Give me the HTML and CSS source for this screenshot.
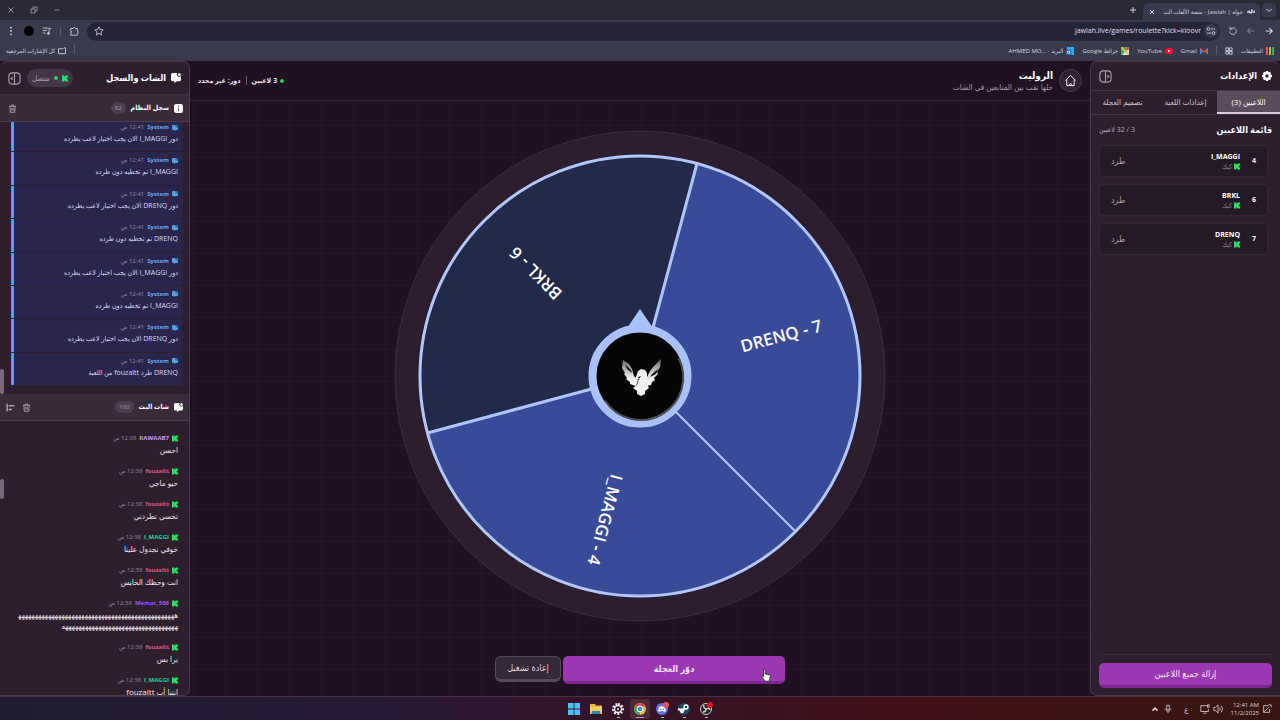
FILE: index.html
```html
<!DOCTYPE html>
<html lang="ar" dir="rtl">
<head>
    <meta charset="UTF-8">
    <meta name="viewport" content="width=device-width, initial-scale=1.0">
    <title>جولة | Jawlah - منصة الألعاب</title>
    <link rel="stylesheet" href="styles.css">
</head>
<body>
    <!-- Icons -->
    <svg class="sprite" aria-hidden="true">
        <symbol id="kick" viewBox="0 0 10 10"><path d="M0 0h4v2h1V1h1V0h4v3H9v1H8v2h1v1h1v3H6V9H5V8H4v2H0z"/></symbol>
        <symbol id="chat" viewBox="0 0 12 12"><path d="M2 0h5.500a2.500 2.500 0 0 0 4.500 3.500V8a2 2 0 0 1-2 2H7l-3 2v-2H2a2 2 0 0 1-2-2V2a2 2 0 0 1 2-2z"/><circle cx="10" cy="2" r="1.700"/></symbol>
        <symbol id="trash" viewBox="0 0 12 12"><path d="M1.500 3h9M4.500 3V1.500h3V3M2.500 3l.5 8h6l.5-8M5 5.200v3.600M7 5.200v3.600" fill="none" stroke="currentColor" stroke-width="1.300"/></symbol>
        <symbol id="panel" viewBox="0 0 14 14"><rect x="1" y="1" width="12" height="12" rx="3.500" fill="none" stroke="currentColor" stroke-width="1.200"/><path d="M7 1v12M9 5.500 10.500 7 9 8.500" fill="none" stroke="currentColor" stroke-width="1.200"/></symbol>
        <symbol id="arrow" viewBox="0 0 12 12"><path d="M2 6h8M6.500 2.500 10 6 6.500 9.500" fill="none" stroke="currentColor" stroke-width="1.300"/></symbol>
    </svg>

    <div class="browser">
        <div class="tab-strip">
            <button class="tab-menu" aria-label="بحث في علامات التبويب"><svg viewBox="0 0 8 8"><path d="M1.500 3 4 5.500 6.500 3" class="line"/></svg></button>
            <div class="browser-tab">
                <svg class="favicon" viewBox="0 0 10 6"><path d="M0 2h2V1h2v2h1V0h2v3h1V1h2v3H6v1H3V4H0z"/></svg>
                <span class="tab-title">جولة | Jawlah - منصة الألعاب الت</span>
                <button aria-label="إغلاق"><svg viewBox="0 0 8 8"><path d="m2 2 4 4M6 2 2 6" class="line"/></svg></button>
            </div>
            <button class="new-tab" aria-label="علامة تبويب جديدة"><svg viewBox="0 0 8 8"><path d="M4 1v6M1 4h6" class="line"/></svg></button>
            <div class="window-buttons">
                <button aria-label="تصغير"><svg viewBox="0 0 8 8"><path d="M1.500 4h5" class="line"/></svg></button>
                <button aria-label="استعادة"><svg viewBox="0 0 8 8"><path d="M1 3h4v4H1zM3 3V1h4v4H5" class="line"/></svg></button>
                <button aria-label="إغلاق النافذة"><svg viewBox="0 0 8 8"><path d="m1.500 1.500 5 5M6.500 1.500l-5 5" class="line"/></svg></button>
            </div>
        </div>
        <div class="toolbar">
            <button aria-label="التالي"><svg viewBox="0 0 12 12"><use href="#arrow"/></svg></button>
            <button class="dim" aria-label="السابق"><svg class="flip" viewBox="0 0 12 12"><use href="#arrow"/></svg></button>
            <button aria-label="تحديث"><svg viewBox="0 0 12 12"><path d="M3 3.500A4 4 0 1 1 2 6.500M2.500 1v3h3" class="line"/></svg></button>
            <div class="address">
                <span class="site-info"><svg viewBox="0 0 12 12"><path d="M6 3.500h5M1 8.500h5" class="line"/><circle cx="3" cy="3.500" r="1.700" class="line"/><circle cx="9" cy="8.500" r="1.700" class="line"/></svg></span>
                <input type="text" dir="ltr" aria-label="العنوان" value="jawlah.live/games/roulette?kick=kloovr">
                <button aria-label="إشارة مرجعية"><svg viewBox="0 0 12 12"><path d="m6 1 1.500 3.300 3.500.4-2.600 2.400.7 3.600L6 8.900l-3.100 1.800.7-3.600L1 4.700l3.500-.4z" class="line"/></svg></button>
            </div>
            <button class="extensions" aria-label="الإضافات"><svg viewBox="0 0 12 12"><path d="M2 3h3a1.300 1.300 0 0 1 2.600 0H10v3a1.300 1.300 0 0 1 0 2.600V11H2V8.600a1.300 1.300 0 0 0 0-2.600z" class="line"/></svg></button>
            <span class="divider"></span>
            <button aria-label="الوسائط"><svg viewBox="0 0 12 12"><path d="M1 2.500h7M1 5.500h5M1 8.500h3M8.500 9V3H11" class="line"/><circle cx="7.500" cy="9" r="1.500"/></svg></button>
            <button class="profile" aria-label="الملف الشخصي"></button>
            <button aria-label="القائمة"><svg viewBox="0 0 12 12"><circle cx="6" cy="2" r="1.100"/><circle cx="6" cy="6" r="1.100"/><circle cx="6" cy="10" r="1.100"/></svg></button>
        </div>
        <nav class="bookmarks">
            <a href="#"><svg viewBox="0 0 9 9"><path fill="#ef5b52" d="M0 0h2v9H0z"/><path fill="#e5c044" d="M3.500 0h2v9h-2z"/><path fill="#43b670" d="M7 0h2v9H7z"/></svg>التطبيقات</a>
            <a href="#" aria-label="مجموعات"><svg viewBox="0 0 9 9"><path d="M1 1h3v3H1zM5 1h3v3H5zM1 5h3v3H1zM5 5h3v3H5z" class="line"/></svg></a>
            <span class="divider"></span>
            <a href="#"><svg viewBox="0 0 9 9"><path fill="#4789ed" d="M0 2h2v6H0z"/><path fill="#39a957" d="M7 2h2v6H7z"/><path fill="#e54d42" d="m0 1 4.500 3.500L9 1v2L4.500 6.500 0 3z"/></svg>Gmail</a>
            <a href="#"><svg viewBox="0 0 9 9"><rect y="1" width="9" height="7" rx="2" fill="#ff0035"/><path fill="#fff" d="m3.500 3 2.500 1.500L3.500 6z"/></svg>YouTube</a>
            <a href="#"><svg viewBox="0 0 9 9"><path fill="#40af61" d="M0 0h9v9H0z"/><path fill="#e4e9ec" d="m1 9 8-8v8z"/><path stroke="#e8bd42" stroke-width="2" d="m0 0 9 9"/><circle cx="7" cy="2" r="2" fill="#e44e45"/></svg><span>خرائط Google</span></a>
            <a href="#"><svg viewBox="0 0 9 9"><path fill="#36a9ec" d="M1 0h8v9H1z"/><path fill="#1269bd" d="M0 3h6v6H0z"/><circle cx="3" cy="6" r="1.400" fill="none" stroke="#fff"/></svg><span>البريد - <bdi>AHMED MO...</bdi></span></a>
            <div class="all-bookmarks">
                <span class="divider"></span>
                <a href="#"><svg viewBox="0 0 9 9"><path d="M.5 2h5l1-1h2v6.500h-8z" class="line"/></svg>كل الإشارات المرجعية</a>
            </div>
        </nav>
    </div>

    <div class="app">
        <aside class="panel settings">
            <header class="panel-head">
                <svg class="head-icon" viewBox="0 0 12 12"><path fill-rule="evenodd" d="M4.800 0h2.400l.4 1.600 1.500-.6 1.800 1.800-.8 1.500 1.900.5v2.400l-1.900.5.8 1.500-1.800 1.800-1.500-.8-.4 1.800H4.800l-.4-1.800-1.500.8-1.800-1.800.8-1.500L0 7.200V4.800l1.900-.5-.8-1.500L2.900 1l1.500.6zM6 4a2 2 0 1 0 0 4 2 2 0 0 0 0-4z"/></svg>
                <h2>الإعدادات</h2>
                <button class="collapse" aria-label="طي اللوحة"><svg viewBox="0 0 14 14"><use href="#panel"/></svg></button>
            </header>
            <div class="tabs">
                <button class="tab active">اللاعبين (3)</button>
                <button class="tab">إعدادات اللعبة</button>
                <button class="tab">تصميم العجلة</button>
            </div>
            <div class="players-head">
                <h3>قائمة اللاعبين</h3>
                <span>3 / 32 لاعبين</span>
            </div>
            <ul class="players">
                <li class="player">
                    <span class="number">4</span>
                    <div class="who"><strong>I_MAGGI</strong><small><svg class="kick"><use href="#kick"/></svg>كيك</small></div>
                    <button class="kick-out">طرد</button>
                </li>
                <li class="player">
                    <span class="number">6</span>
                    <div class="who"><strong>BRKL</strong><small><svg class="kick"><use href="#kick"/></svg>كيك</small></div>
                    <button class="kick-out">طرد</button>
                </li>
                <li class="player">
                    <span class="number">7</span>
                    <div class="who"><strong>DRENQ</strong><small><svg class="kick"><use href="#kick"/></svg>كيك</small></div>
                    <button class="kick-out">طرد</button>
                </li>
            </ul>
            <footer class="settings-foot">
                <button class="primary">إزالة جميع اللاعبين</button>
            </footer>
        </aside>

        <main class="game">
            <header class="game-head">
                <a class="home" href="#" aria-label="الرئيسية"><svg viewBox="0 0 14 14"><path d="M1.500 7 7 1.500 12.500 7M3 6v6.500h8V6M5.500 12a1.500 1.500 0 0 1 3 0" class="line"/></svg></a>
                <div class="game-title">
                    <h1>الروليت</h1>
                    <p>خلها تقب بين المتابعين في الشات</p>
                </div>
                <div class="status">
                    <span class="dot"></span>
                    <span>3 لاعبين</span>
                    <span class="divider"></span>
                    <span>دور: غير محدد</span>
                </div>
            </header>
            <div class="stage">
                <svg class="wheel" viewBox="0 0 492 492">
                    <defs>
                        <linearGradient id="wing" x1="0" y1="0" x2="0" y2="1"><stop offset="0" stop-color="#666"/><stop offset=".6" stop-color="#ddd"/><stop offset="1" stop-color="#fff"/></linearGradient>
                    </defs>
                    <circle cx="246" cy="246" r="245" fill="#2d1e2f" stroke="#3a2b3d"/>
                    <circle cx="246" cy="246" r="220" fill="#394b98"/>
                    <path d="M246 246 33.500 303A220 220 0 0 1 303 33.500z" fill="#232948"/>
                    <path d="M303 33.500 246 246 33.500 303" fill="none" stroke="#aec4fb" stroke-width="3"/>
                    <path d="m246 246 155.500 155.500" stroke="#aec4fb" stroke-width="2"/>
                    <circle cx="246" cy="246" r="220" fill="none" stroke="#b2c7fd" stroke-width="3"/>
                    <g class="slice-label">
                        <text transform="translate(387 205) rotate(-15)" dy="7">DRENQ - 7</text>
                        <text transform="translate(141 144) rotate(225)" dy="7">BRKL - 6</text>
                        <text transform="translate(212 390) rotate(105)" dy="7">I_MAGGI - 4</text>
                    </g>
                    <path d="m246 179 15 22h-30z" fill="#a9c1f8"/>
                    <circle cx="246" cy="246" r="47.500" fill="#050505" stroke="#a9c1f8" stroke-width="8"/>
                    <path d="M284.500 228A42.500 42.500 0 0 1 211 270.500" fill="none" stroke="#4c4c4c" stroke-width="2"/>
                    <!-- eagle -->
                    <path d="M229 230 228 238l3 5-1 1 3 4-1 1 4 3 0 2 6 2 2-6-4-4-2-7-3-5zM267 229l-7 7-4 5-3 6-1 9 5-1 1-3 3-2-1-2 4-4-1-2 3-5z" fill="url(#wing)"/>
                    <path d="m244 241 3-2 4 1 2 3 0 11 2 4-4 3 0 3-4 2-4-2 0-3-4-3 4-3 2-6-4 1z" fill="#f2f2f2"/>
                    <path d="m231 234 6 6 1 3-5-4zM264 239l-6 5-2 3 6-3zM244 247l3-1-2 3z" fill="#111"/>
                </svg>
            </div>
            <div class="actions">
                <button class="primary spin">دوّر العجلة</button>
                <button class="restart">إعادة تشغيل</button>
                <svg class="pointer" viewBox="0 0 12 16"><path d="M3 1.500c1-1 2 0 2 1V6l5 1c1 .3 1.500 1 1.300 2l-.8 4-1 2H5L1 10c-.5-1 .5-1.700 1.300-1.200L3 9.500z" fill="#fff" stroke="#222"/></svg>
            </div>
        </main>

        <aside class="panel feed">
            <header class="panel-head">
                <svg class="head-icon" viewBox="0 0 12 12"><use href="#chat"/></svg>
                <h2>الشات والسجل</h2>
                <span class="connected"><svg class="kick"><use href="#kick"/></svg><i class="dot"></i>متصل</span>
                <button class="collapse" aria-label="طي اللوحة"><svg class="flip" viewBox="0 0 14 14"><use href="#panel"/></svg></button>
            </header>
            <section class="log">
                <header class="section-head">
                    <svg class="section-icon" viewBox="0 0 12 12"><path fill-rule="evenodd" d="M3 0h6a3 3 0 0 1 3 3v6a3 3 0 0 1-3 3H3a3 3 0 0 1-3-3V3a3 3 0 0 1 3-3zm2.500 2.500V4h1V2.500zm0 2.500v4.500h1V5z"/></svg>
                    <h3>سجل النظام</h3>
                    <span class="count">82</span>
                    <button aria-label="مسح"><svg viewBox="0 0 12 12"><use href="#trash"/></svg></button>
                </header>
                <div class="log-view">
                    <div class="log-list">
                        <article class="event"><p class="meta"><svg class="sys"><use href="#chat"/></svg><b>System</b><time>12:41 ص</time></p><p>دور I_MAGGI الان يجب اختيار لاعب يطرده</p></article>
                        <article class="event"><p class="meta"><svg class="sys"><use href="#chat"/></svg><b>System</b><time>12:41 ص</time></p><p>I_MAGGI تم تخطيه دون طرده</p></article>
                        <article class="event"><p class="meta"><svg class="sys"><use href="#chat"/></svg><b>System</b><time>12:41 ص</time></p><p>دور DRENQ الان يجب اختيار لاعب يطرده</p></article>
                        <article class="event"><p class="meta"><svg class="sys"><use href="#chat"/></svg><b>System</b><time>12:41 ص</time></p><p>DRENQ تم تخطيه دون طرده</p></article>
                        <article class="event"><p class="meta"><svg class="sys"><use href="#chat"/></svg><b>System</b><time>12:41 ص</time></p><p>دور I_MAGGI الان يجب اختيار لاعب يطرده</p></article>
                        <article class="event"><p class="meta"><svg class="sys"><use href="#chat"/></svg><b>System</b><time>12:41 ص</time></p><p>I_MAGGI تم تخطيه دون طرده</p></article>
                        <article class="event"><p class="meta"><svg class="sys"><use href="#chat"/></svg><b>System</b><time>12:41 ص</time></p><p>دور DRENQ الان يجب اختيار لاعب يطرده</p></article>
                        <article class="event"><p class="meta"><svg class="sys"><use href="#chat"/></svg><b>System</b><time>12:41 ص</time></p><p>DRENQ طرد fouzaltt من اللعبة</p></article>
                    </div>
                    <span class="thumb"></span>
                </div>
            </section>
            <section class="chat">
                <header class="section-head">
                    <svg class="section-icon" viewBox="0 0 12 12"><use href="#chat"/></svg>
                    <h3>شات البث</h3>
                    <span class="count">100</span>
                    <button aria-label="مسح"><svg viewBox="0 0 12 12"><use href="#trash"/></svg></button>
                    <button aria-label="محاذاة"><svg viewBox="0 0 12 12"><path d="M1.500 1v10M3.500 3.500H11M3.500 8.500H8" class="line bold"/></svg></button>
                </header>
                <div class="chat-view">
                    <article class="message"><p class="meta"><svg class="kick"><use href="#kick"/></svg><b class="lilac">RAWAAB7</b><time>12:38 ص</time></p><p>احسن</p></article>
                    <article class="message"><p class="meta"><svg class="kick"><use href="#kick"/></svg><b class="pink">fouzaltt</b><time>12:38 ص</time></p><p>حيو ماجي</p></article>
                    <article class="message"><p class="meta"><svg class="kick"><use href="#kick"/></svg><b class="pink">fouzaltt</b><time>12:38 ص</time></p><p>تخسي تطردني</p></article>
                    <article class="message"><p class="meta"><svg class="kick"><use href="#kick"/></svg><b class="teal">I_MAGGI</b><time>12:38 ص</time></p><p>خوفي تجدول علينا</p></article>
                    <article class="message"><p class="meta"><svg class="kick"><use href="#kick"/></svg><b class="pink">fouzaltt</b><time>12:38 ص</time></p><p>انت وحظك الخايس</p></article>
                    <article class="message"><p class="meta"><svg class="kick"><use href="#kick"/></svg><b class="violet">Memat_506</b><time>12:38 ص</time></p><p>ههههههههههههههههههههههههههههههههههههههههههههههههههههههههههههههههههههههههههههههههههه</p></article>
                    <article class="message"><p class="meta"><svg class="kick"><use href="#kick"/></svg><b class="pink">fouzaltt</b><time>12:38 ص</time></p><p>برا بس</p></article>
                    <article class="message"><p class="meta"><svg class="kick"><use href="#kick"/></svg><b class="teal">I_MAGGI</b><time>12:38 ص</time></p><p>انتبا أب fouzaltt</p></article>
                    <span class="thumb"></span>
                </div>
            </section>
        </aside>
    </div>

    <footer class="taskbar">
        <div class="tray">
            <svg viewBox="0 0 12 12"><path d="M8 2H2v8h7V6M2 10l6-6M8 1h3v3" class="line"/></svg>
            <time dir="ltr">12:41 AM<br>11/2/2025</time>
            <svg viewBox="0 0 12 12"><path d="M1 4h2l3-3v10L3 8H1zM8 4q1.500 2 0 4M10 2q3 4 0 8" class="line"/></svg>
            <svg viewBox="0 0 12 12"><path d="M8 2H1v7h9V6M4 11h4M9 1h2v3H9z" class="line"/></svg>
            <span class="lang">ع</span>
            <svg viewBox="0 0 12 12"><path d="M4.500 1.500h3v5h-3zM2.500 5.500c0 4 7 4 7 0M6 8.500V11" class="line"/></svg>
            <svg viewBox="0 0 12 12"><path d="m3 8 3-3 3 3" class="line bold"/></svg>
        </div>
        <div class="dock" dir="ltr">
            <button aria-label="ابدأ"><svg viewBox="0 0 14 14"><path fill="#4cc2f4" d="M1 1h5.600v5.600H1zM7.400 1H13v5.600H7.400zM1 7.400h5.600V13H1zM7.400 7.400H13V13H7.400z"/></svg></button>
            <button aria-label="الملفات"><svg viewBox="0 0 14 14"><path fill="#e9b43a" d="M1 2h5l1 1.500h6V12H1z"/><path fill="#f7d35d" d="M1 5h12v5H1z"/><path fill="#2c83c4" d="M3 9h8v3H3z"/></svg></button>
            <button class="running" aria-label="الإعدادات"><svg viewBox="0 0 14 14"><path fill="none" stroke="#eee" stroke-width="2" stroke-dasharray="2 1.500" d="M7 2a5 5 0 1 1 0 10A5 5 0 1 1 7 2"/><circle cx="7" cy="7" r="3.500" fill="none" stroke="#eee" stroke-width="1.500"/><circle cx="7" cy="7" r="1" fill="#eee"/></svg></button>
            <button class="current" aria-label="Chrome"><svg viewBox="0 0 14 14"><circle cx="7" cy="7" r="6" fill="#e5bd38"/><path fill="#dc493e" d="M7 7 1.800 4A6 6 0 0 1 12.200 4z"/><path fill="#3ca45a" d="M7 7 1.800 4A6 6 0 0 0 7 13z"/><circle cx="7" cy="7" r="3" fill="#4b8cf1" stroke="#fff"/></svg></button>
            <button class="running" aria-label="Discord"><svg viewBox="0 0 14 14"><circle cx="7" cy="7" r="6" fill="#6270df"/><path fill="#fff" d="M4 5q3-1.500 6 0l1 4-2 1-.7-1H5.700L5 10 3 9z"/><circle cx="5.700" cy="7.200" r=".8" fill="#6270df"/><circle cx="8.300" cy="7.200" r=".8" fill="#6270df"/><circle cx="11" cy="3" r="3" fill="#e9525a"/></svg></button>
            <button class="running" aria-label="Steam"><svg viewBox="0 0 14 14"><circle cx="7" cy="7" r="6" fill="#1b4767"/><circle cx="9" cy="5" r="2" fill="none" stroke="#fff" stroke-width="1.300"/><path stroke="#fff" stroke-width="2" d="m1 7 5 2 2-3"/><circle cx="5" cy="9.500" r="1.800" fill="#fff"/></svg></button>
            <button class="running" aria-label="OBS"><svg viewBox="0 0 14 14"><circle cx="7" cy="7" r="5.500" fill="#222" stroke="#ccc"/><path d="M7 7q-3-1-2-4M7 7q3-2 4 1M7 7q0 3-3 3" fill="none" stroke="#ccc" stroke-width="1.500"/><circle cx="11" cy="3" r="3" fill="#e81020"/></svg></button>
        </div>
    </footer>
</body>
</html>
```
FILE: styles.css
```css
* {
    box-sizing: border-box;
}
body {
    margin: 0;
    height: 100vh;
    display: flex;
    flex-direction: column;
    overflow: hidden;
    background-color: #1f1022;
    color: #eee6ef;
    font-family: "Open Sans", "DejaVu Sans Condensed", "DejaVu Sans", sans-serif;
    font-size: 8px;
    line-height: 12px;
}
h1, h2, h3, p, ul {
    margin: 0;
    padding: 0;
}
button {
    border: none;
    padding: 0;
    background: none;
    color: inherit;
    font: inherit;
    cursor: pointer;
}
a {
    color: inherit;
    text-decoration: none;
}
svg {
    display: block;
    flex: none;
    fill: currentColor;
}
.sprite {
    position: absolute;
    width: 0;
    height: 0;
}
.line {
    fill: none;
    stroke: currentColor;
    stroke-width: 1;
}
.line.bold {
    stroke-width: 2;
}
.flip {
    transform: scaleX(-1);
}
.divider {
    width: 1px;
    height: 9px;
    background-color: #5b5a70;
}
.kick {
    width: 6px;
    height: 7px;
    color: #1ee660;
}
.dot {
    width: 4px;
    height: 4px;
    border-radius: 50%;
    background-color: #1fd65f;
}

/* Browser */
.browser {
    background-color: #393b4d;
    color: #d2d1dc;
    font-size: 7px;
}
.tab-strip {
    display: flex;
    align-items: center;
    height: 20px;
    padding: 0 4px;
    background-color: #292a36;
}
.tab-strip svg {
    width: 8px;
    height: 8px;
}
.tab-menu {
    padding: 3px;
    border-radius: 4px;
    background-color: #393b4d;
}
.browser-tab {
    display: flex;
    align-items: center;
    gap: 4px;
    width: 117px;
    height: 17px;
    margin: 3px 2px 0 0;
    padding: 0 5px;
    border-radius: 6px 6px 0 0;
    background-color: #393b4d;
}
.tab-strip .favicon {
    height: 6px;
}
.tab-title {
    flex: 1;
    font-size: 6px;
    white-space: nowrap;
}
.new-tab {
    margin-right: 6px;
}
.window-buttons {
    display: flex;
    gap: 15px;
    margin-right: auto;
    padding-left: 3px;
    color: #8c8b9a;
}
.toolbar {
    display: flex;
    align-items: center;
    gap: 8px;
    height: 22px;
    padding: 0 6px;
}
.toolbar svg {
    width: 10px;
    height: 10px;
}
.dim {
    color: #777789;
}
.address {
    display: flex;
    flex: 1;
    align-items: center;
    gap: 3px;
    height: 19px;
    padding: 0 2px 0 7px;
    border-radius: 10px;
    background-color: #262538;
}
.site-info {
    padding: 2px;
    border-radius: 50%;
    background-color: #393b4d;
}
.address input {
    flex: 1;
    min-width: 0;
    border: none;
    padding: 0;
    background: none;
    color: #e1dfeb;
    font: inherit;
    text-align: right;
}
.profile {
    width: 10px;
    height: 10px;
    border-radius: 50%;
    background-color: #000;
}
.bookmarks {
    display: flex;
    align-items: center;
    gap: 8px;
    height: 19px;
    padding: 0 6px 2px;
    font-size: 6px;
}
.bookmarks a {
    display: flex;
    align-items: center;
    gap: 3px;
}
.bookmarks svg {
    width: 8px;
    height: 8px;
}
.all-bookmarks {
    display: flex;
    gap: 8px;
    margin-right: auto;
}

/* Layout */
.app {
    display: flex;
    flex: 1;
    min-height: 0;
}
.panel {
    display: flex;
    flex: none;
    flex-direction: column;
    width: 190px;
    border: 1px solid #4a394c;
    background-color: #2e1f2f;
    overflow: hidden;
}
.settings {
    border-right: none;
    border-radius: 7px 7px 0 7px;
}
.feed {
    border-left: none;
    border-radius: 7px 7px 7px 0;
}
.panel-head {
    display: flex;
    align-items: center;
    flex: none;
    gap: 5px;
    padding: 0 8px;
    border-bottom: 1px solid #423244;
}
.panel-head h2 {
    color: #fff;
    font-size: 9px;
    font-weight: bold;
}
.head-icon {
    width: 10px;
    height: 10px;
    color: #fff;
}
.collapse {
    margin-right: auto;
    color: #aa9fac;
}
.collapse svg {
    width: 13px;
    height: 13px;
}

/* Settings panel */
.settings .panel-head {
    height: 29px;
}
.tabs {
    display: grid;
    grid-template-columns: repeat(3, 1fr);
    height: 24px;
    border-bottom: 1px solid #423244;
}
.tab {
    border-bottom: 2px solid transparent;
    color: #ccc1cd;
}
.tab.active {
    border-color: #ddcbe2;
    background-color: #5b4c5d;
    color: #fff;
}
.players-head {
    display: flex;
    align-items: center;
    justify-content: space-between;
    padding: 9px 8px;
    color: #b8adba;
    font-size: 7px;
}
.players-head h3 {
    color: #fff;
    font-size: 9px;
}
.players {
    display: flex;
    flex-direction: column;
    gap: 7px;
    padding: 0 12px 0 8px;
    list-style: none;
}
.player {
    display: flex;
    align-items: center;
    height: 32px;
    padding: 0 11px;
    border: 1px solid #352737;
    border-radius: 4px;
    background-color: #261926;
}
.number {
    width: 16px;
    color: #fff;
    font-size: 7px;
    font-weight: bold;
}
.who strong {
    display: block;
    color: #fff;
    font-size: 7px;
    line-height: 10px;
}
.who small {
    display: flex;
    align-items: center;
    gap: 2px;
    color: #8e8291;
    font-size: 7px;
    line-height: 9px;
}
.kick-out {
    margin-right: auto;
    color: #a89daa;
    font-size: 9px;
}
.settings-foot {
    margin: auto 8px 0;
    padding: 8px 0 7px;
    border-top: 1px solid #392a3b;
}
.primary {
    border-radius: 5px;
    border-bottom: 3px solid #7c278f;
    background-color: #9b37b1;
    color: #f5e8f8;
}
.settings-foot .primary {
    display: block;
    width: 100%;
    height: 25px;
    font-size: 9px;
}

/* Game */
.game {
    display: flex;
    flex: 1;
    flex-direction: column;
    min-width: 0;
    background-color: #1f1022;
    background-image: linear-gradient(#271829 1px, transparent 1px), linear-gradient(90deg, #271829 1px, transparent 1px);
    background-position: 3px 0;
    background-size: 32px 32px;
}
.game-head {
    display: flex;
    align-items: center;
    flex: none;
    gap: 6px;
    height: 40px;
    padding: 0 8px;
    border-bottom: 1px solid #382638;
    background-color: #1f1022;
}
.home {
    padding: 4px;
    border: 1px solid #4a394c;
    border-radius: 50%;
    background-color: #302133;
    color: #fff;
}
.home svg {
    width: 13px;
    height: 13px;
}
.game-title h1 {
    color: #fff;
    font-size: 10px;
    line-height: 12px;
}
.game-title p {
    color: #a99cac;
}
.status {
    display: flex;
    align-items: center;
    gap: 3px;
    margin-right: auto;
    font-size: 7px;
    font-weight: bold;
}
.status .divider {
    margin: 0 2px;
}
.stage {
    display: flex;
    flex: 1;
    justify-content: center;
    min-height: 0;
    padding: 29px 0 34px;
}
.wheel {
    height: 100%;
    max-width: 100%;
}
.slice-label {
    fill: #fff;
    direction: ltr;
    font-size: 17px;
    font-weight: 600;
    text-anchor: middle;
}
.actions {
    position: relative;
    display: flex;
    align-items: flex-start;
    align-self: center;
    gap: 2px;
    height: 40px;
}
.spin {
    width: 222px;
    height: 28px;
    font-size: 9px;
    font-weight: bold;
}
.restart {
    width: 66px;
    height: 26px;
    border: 1px solid #574a5b;
    border-bottom-width: 3px;
    border-radius: 6px;
    background-color: #352839;
    color: #ddd3df;
    font-size: 9px;
}
.pointer {
    position: absolute;
    top: 13px;
    right: 14px;
    width: 10px;
    height: 13px;
}

/* Feed panel */
.feed .panel-head {
    height: 33px;
}
.feed .collapse {
    margin-right: 1px;
}
.connected {
    display: flex;
    align-items: center;
    gap: 4px;
    margin-right: auto;
    padding: 3px 5px;
    border-radius: 9px;
    background-color: #443548;
    color: #a99cac;
}
.section-head {
    display: flex;
    align-items: center;
    flex: none;
    gap: 5px;
    height: 27px;
    padding: 0 6px;
    border-bottom: 1px solid #4c3c4f;
    background-color: #3a2b3b;
    color: #aa9fac;
}
.section-head h3 {
    color: #fff;
    font-size: 7px;
}
.section-head svg {
    width: 9px;
    height: 9px;
}
.section-icon {
    color: #fff;
}
.count {
    min-width: 14px;
    padding: 0 4px;
    border-radius: 6px;
    background-color: #4c3d4f;
    font-size: 6px;
    text-align: center;
}
.count + button {
    margin-right: auto;
}
.log .section-head {
    padding-left: 8px;
}
.chat .section-head button + button {
    margin-right: 2px;
}
.log, .chat {
    display: flex;
    flex-direction: column;
    min-height: 0;
}
.log {
    flex: 0 0 299px;
}
.chat {
    flex: 1;
}
.log-view {
    position: relative;
    display: flex;
    flex: 1;
    flex-direction: column;
    justify-content: flex-end;
    overflow: hidden;
    padding: 0 6px 9px 11px;
}
.log-list {
    display: grid;
    flex: none;
    grid-auto-rows: 1fr;
    gap: 1px;
    height: 266px;
}
.event {
    padding: 3px 5px 0;
    border-left: 3px solid #5b9ee8;
    background-color: #2a254a;
    color: #dcd8f2;
    font-size: 7px;
}
.meta {
    display: flex;
    align-items: center;
    gap: 3px;
    font-size: 6px;
    line-height: 11px;
}
.meta b {
    color: #62a5ee;
}
.meta time {
    color: #9186a2;
}
.sys {
    width: 6px;
    height: 6px;
    color: #4ea4ee;
}
.thumb {
    position: absolute;
    left: 0;
    bottom: 0;
    width: 4px;
    height: 25px;
    border-radius: 2px;
    background-color: #78697b;
}
.chat-view {
    position: relative;
    flex: 1;
    min-height: 0;
    overflow: hidden;
    padding: 11px 11px 0 16px;
}
.chat-view .thumb {
    top: 21%;
    bottom: auto;
    height: 20px;
}
.message {
    padding-bottom: 10px;
    line-height: 11px;
    overflow-wrap: anywhere;
}
.message .meta {
    line-height: 12px;
}
.message .lilac { color: #c59bf7; }
.message .pink { color: #e0567f; }
.message .teal { color: #25d0a0; }
.message .violet { color: #9654ed; }

/* Taskbar */
.taskbar {
    display: grid;
    grid-template-columns: 1fr auto 1fr;
    align-items: center;
    height: 24px;
    padding: 0 8px;
    border-top: 1px solid #493147;
    background: linear-gradient(90deg, #201c30, #261a32 30%, #32152b 45%, #3f1017 70%, #37160f);
}
.tray {
    display: flex;
    align-items: center;
    gap: 3px;
    color: #d9ced2;
}
.tray svg {
    width: 10px;
    height: 10px;
}
.tray time {
    margin-left: 5px;
    font-size: 6px;
    line-height: 8px;
    text-align: right;
}
.lang {
    margin: 0 8px;
}
.dock {
    display: flex;
    gap: 2px;
}
.dock button {
    position: relative;
    padding: 3px;
    border-radius: 3px;
}
.dock svg {
    width: 14px;
    height: 14px;
}
.dock .current {
    background-color: #4b2937;
}
.running::after, .current::after {
    content: "";
    position: absolute;
    bottom: 1px;
    left: 9px;
    width: 3px;
    height: 1px;
    background-color: #b8abb2;
}
.current::after {
    left: 6px;
    width: 8px;
    background-color: #d783d3;
}
```
